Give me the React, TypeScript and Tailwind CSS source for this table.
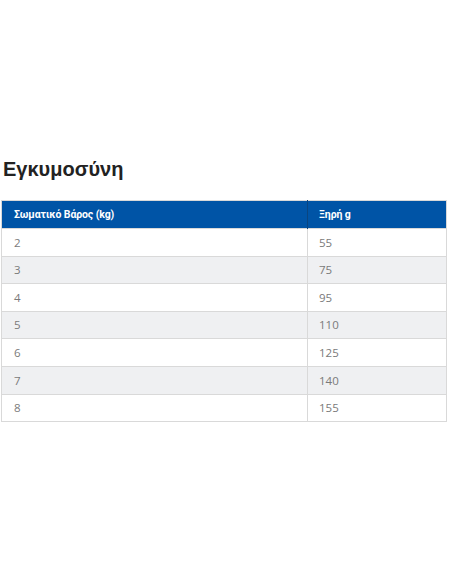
const rows = [
  ['2', '55'],
  ['3', '75'],
  ['4', '95'],
  ['5', '110'],
  ['6', '125'],
  ['7', '140'],
  ['8', '155'],
];

export default function App() {
  return (
    <div className="min-h-[584px] w-[452px] bg-white pt-[155px] font-['Liberation_Sans',sans-serif]">
      <h2 className="mb-[16px] pl-[3px] text-[20px] font-bold leading-[29px] text-[#222]">
        Εγκυμοσύνη
      </h2>
      <table className="ml-[1px] w-[446px] border-collapse border border-[#d9d9d9]">
        <thead>
          <tr className="h-[28px] bg-[#0054a6] text-left">
            <th className="w-[306px] border-r border-[#0a4580] pl-[12px] font-['Roboto',sans-serif] text-[10.5px] font-bold tracking-[-0.1px] text-white">
              Σωματικό Βάρος (kg)
            </th>
            <th className="pl-[11px] font-['Roboto',sans-serif] text-[10.5px] font-bold tracking-[-0.1px] text-white">
              Ξηρή g
            </th>
          </tr>
        </thead>
        <tbody>
          {rows.map((row, i) => (
            <tr
              key={row[0]}
              className={`h-[27.6px] border-t border-[#d9d9d9] ${i % 2 === 1 ? 'bg-[#eff0f2]' : 'bg-white'}`}
            >
              <td className="border-r border-[#d9d9d9] pl-[12px] font-['Open_Sans',sans-serif] text-[11.5px] text-[#7a7a7a]">
                {row[0]}
              </td>
              <td className="pl-[11px] font-['Open_Sans',sans-serif] text-[11.5px] text-[#7a7a7a]">
                {row[1]}
              </td>
            </tr>
          ))}
        </tbody>
      </table>
    </div>
  );
}
